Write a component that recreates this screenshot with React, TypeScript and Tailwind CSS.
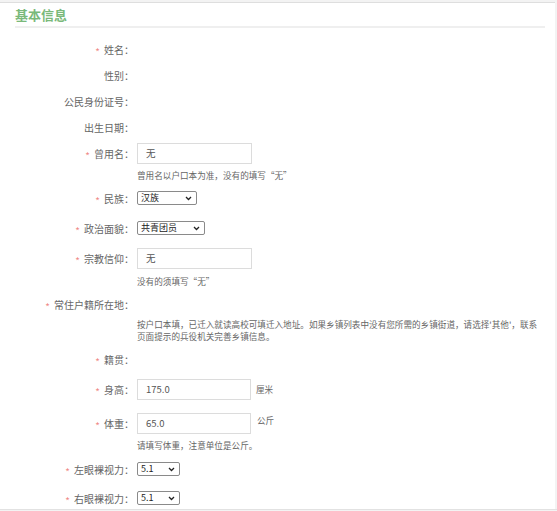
import { ReactNode } from 'react'

const font = { fontFamily: '"Noto Sans CJK SC", "Liberation Sans", sans-serif' }

// 左侧标签，带可选的必填星号
function Label({ text, required }: { text: string; required?: boolean }) {
  return (
    <div className="flex w-[134px] shrink-0 items-center justify-end text-[10px] text-[#666]">
      {required ? <span className="relative top-[2px] mr-[4px] text-[10px] text-[#f08a8a]">*</span> : null}
      <span>{text}：</span>
    </div>
  )
}

function Row({ label, required, h, children }: { label: string; required?: boolean; h: string; children?: ReactNode }) {
  return (
    <div className={`flex items-center ${h}`}>
      <Label text={label} required={required} />
      <div className="ml-[3px] flex items-center">{children}</div>
    </div>
  )
}

function Hint({ h, children }: { h: string; children: ReactNode }) {
  return <div className={`ml-[137px] flex items-center text-[8.6px] text-[#666] ${h}`}>{children}</div>
}

function TextBox({ value, w = 'w-[115px]' }: { value: string; w?: string }) {
  return (
    <div className={`flex h-[21px] items-center border border-[#dcdcdc] bg-white pl-[8px] text-[9.5px] text-[#555] ${w}`}>
      {value}
    </div>
  )
}

function Select({ value, w }: { value: string; w: string }) {
  return (
    <div className={`flex h-[14px] items-center justify-between rounded-[2px] border border-[#8a8a8a] bg-white pl-[3px] pr-[4px] text-[9px] text-[#222] ${w}`}>
      <span>{value}</span>
      <svg width="7" height="5" viewBox="0 0 7 5" fill="none">
        <path d="M1 1l2.5 2.5L6 1" stroke="#222" strokeWidth="1.3" />
      </svg>
    </div>
  )
}

export default function App() {
  return (
    <div className="h-[511px] w-[557px] overflow-hidden bg-[#f3f3f3]" style={font}>
      <div className="mt-[2px] h-[507px] w-[555px] border-t border-[#dedede] bg-white pl-[15px]">
        <div className="w-[530px] border-b-2 border-[#efefef]">
          <h2 className="flex h-[23px] items-center text-[13px] font-bold text-[#7ab97a]">基本信息</h2>
        </div>

        <div className="-ml-[15px] pt-[8px]">
          <Row label="姓名" required h="h-[26px]" />
          <Row label="性别" h="h-[26px]" />
          <Row label="公民身份证号" h="h-[26px]" />
          <Row label="出生日期" h="h-[26px]" />
          <Row label="曾用名" required h="h-[26px]">
            <TextBox value="无" />
          </Row>
          <Hint h="h-[18px]">曾用名以户口本为准，没有的填写“无”</Hint>
          <Row label="民族" required h="h-[28px]">
            <Select value="汉族" w="w-[60px]" />
          </Row>
          <Row label="政治面貌" required h="h-[32px]">
            <Select value="共青团员" w="w-[68px]" />
          </Row>
          <Row label="宗教信仰" required h="h-[28px]">
            <TextBox value="无" />
          </Row>
          <Hint h="h-[18px]">没有的须填写“无”</Hint>
          <Row label="常住户籍所在地" required h="h-[28px]" />
          <div className="ml-[137px] w-[402px] text-[8.6px] leading-[12px] text-[#666]">
            按户口本填，已迁入就读高校可填迁入地址。如果乡镇列表中没有您所需的乡镇街道，请选择'其他'，联系页面提示的兵役机关完善乡镇信息。
          </div>
          <Row label="籍贯" required h="h-[34px]" />
          <Row label="身高" required h="h-[26px]">
            <TextBox value="175.0" w="w-[114px]" />
            <span className="ml-[5px] text-[8.6px] text-[#666]">厘米</span>
          </Row>
          <div className="mt-[8px]">
            <Row label="体重" required h="h-[26px]">
              <TextBox value="65.0" w="w-[114px]" />
              <span className="ml-[6px] -mt-[6px] text-[8.6px] text-[#666]">公斤</span>
            </Row>
          </div>
          <Hint h="h-[18px]">请填写体重，注意单位是公斤。</Hint>
          <Row label="左眼裸视力" required h="h-[30px]">
            <Select value="5.1" w="w-[43px]" />
          </Row>
          <Row label="右眼裸视力" required h="h-[28px]">
            <Select value="5.1" w="w-[43px]" />
          </Row>
        </div>
      </div>
      <div className="h-[1px] w-[557px] bg-[#e2e2e2]" />
    </div>
  )
}
